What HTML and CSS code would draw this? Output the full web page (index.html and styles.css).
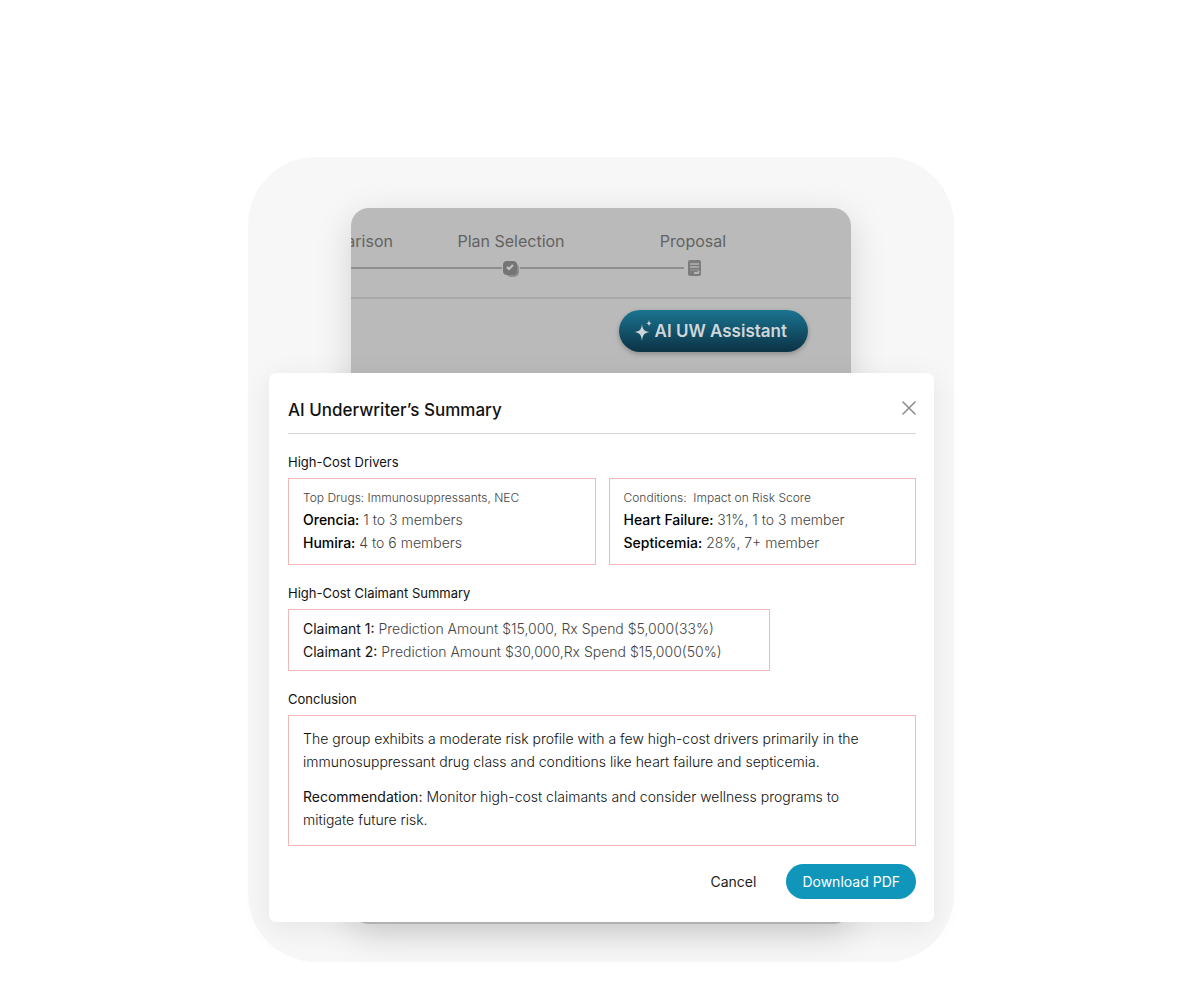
FILE: index.html
```html
<!doctype html>
<html lang="en">
  <head>
    <meta charset="UTF-8" />
    <meta name="viewport" content="width=device-width, initial-scale=1.0" />
    <title>AI Underwriter’s Summary</title>
    <link rel="stylesheet" href="styles.css">
  </head>
  <body>
    <main class="stage">
      <div class="screen">
        <ol class="steps">
          <li class="step">
            <span>Comparison</span>
            <div class="track"><i class="line"></i></div>
          </li>
          <li class="step">
            <span>Plan Selection</span>
            <div class="track">
              <i class="line"></i>
              <svg width="18" height="18" viewBox="0 0 18 18" aria-hidden="true">
                <rect x="4" y="4" width="13" height="14" rx="5" fill="#8c8c8c" />
                <rect x="1" y="2" width="14" height="14" rx="4" fill="#757575" />
                <path d="M5 8l2 2 4-4" fill="none" stroke="#c4c4c4" stroke-width="2" />
              </svg>
              <i class="line"></i>
            </div>
          </li>
          <li class="step">
            <span>Proposal</span>
            <div class="track">
              <i class="line"></i>
              <svg width="18" height="18" viewBox="0 0 18 18" aria-hidden="true">
                <rect x="4" y="1" width="13" height="16" rx="2" fill="#7c7c7c" />
                <path d="M6 5h9M6 8h9" stroke="#a4a4a4" stroke-width="2" />
                <path d="M6 11h9" stroke="#999" />
                <path d="M10 14h4l1-2" fill="none" stroke="#b4b4b4" stroke-width="2" />
              </svg>
              <i class="line line-end"></i>
            </div>
          </li>
        </ol>
        <div class="toolbar">
          <button type="button" class="assistant">
            <svg width="18" height="22" viewBox="0 0 18 22" aria-hidden="true">
              <path d="M8 4c.6 5.500 2 7.400 8 8-6 .8-7.400 3-8 9-.6-6-2-8.200-8-9 6-.6 7.400-2.500 8-8z" fill="#cfd6d9" />
              <path d="M15 0c.3 2.300 1 3 3 3.300-2 .3-2.700 1-3 3.300-.3-2.300-1-3-3-3.300 2-.3 2.700-1 3-3.300z" fill="#cfd6d9" />
            </svg>
            AI UW Assistant
          </button>
        </div>
      </div>

      <section class="modal" role="dialog" aria-labelledby="modalTitle">
        <header class="modal-header">
          <h1 id="modalTitle">AI Underwriter’s Summary</h1>
          <button type="button" class="close" aria-label="Close">
            <svg width="14" height="14" viewBox="0 0 14 14" aria-hidden="true">
              <path d="M1 1l12 12M13 1L1 13" stroke="#8a8a8a" stroke-width="1.500" stroke-linecap="round" />
            </svg>
          </button>
        </header>

        <h2>High-Cost Drivers</h2>
        <div class="drivers">
          <div class="box">
            <p class="caption">Top Drugs: Immunosuppressants, NEC</p>
            <p><strong>Orencia:</strong> 1 to 3 members</p>
            <p><strong>Humira:</strong> 4 to 6 members</p>
          </div>
          <div class="box">
            <p class="caption">Conditions:&nbsp; Impact on Risk Score</p>
            <p><strong>Heart Failure:</strong> 31%, 1 to 3 member</p>
            <p><strong>Septicemia:</strong> 28%, 7+ member</p>
          </div>
        </div>

        <h2>High-Cost Claimant Summary</h2>
        <div class="box claimants">
          <p><b>Claimant 1:</b> Prediction Amount $15,000, Rx Spend $5,000(33%)</p>
          <p><b>Claimant 2:</b> Prediction Amount $30,000,Rx Spend $15,000(50%)</p>
        </div>

        <h2>Conclusion</h2>
        <div class="box conclusion">
          <p>The group exhibits a moderate risk profile with a few high-cost drivers primarily in the immunosuppressant drug class and conditions like heart failure and septicemia.</p>
          <p><b>Recommendation:</b> Monitor high-cost claimants and consider wellness programs to mitigate future risk.</p>
        </div>

        <footer class="actions">
          <button type="button" class="btn">Cancel</button>
          <button type="button" class="btn btn-primary">Download PDF</button>
        </footer>
      </section>
    </main>
  </body>
</html>
```
FILE: styles.css
```css
* {
  box-sizing: border-box;
}
body {
  margin: 0;
  padding: 157px 16px 32px 18px;
  font-family: Inter, "Liberation Sans", sans-serif;
  font-size: 14px;
  line-height: 23px;
  color: #111;
  background-color: #fff;
}
h1,
h2,
p,
ol {
  margin: 0;
  padding: 0;
}
button {
  font: inherit;
  border: none;
  background: none;
  cursor: pointer;
}

/* The app screen and the modal share one grid cell, modal on top */
.stage {
  display: grid;
  grid-template-columns: minmax(0, 1fr);
  max-width: 706px;
  margin: 0 auto;
  border-radius: 68px;
  background-color: #f7f7f7;
}
.screen {
  grid-area: 1 / 1;
  justify-self: center;
  width: 100%;
  max-width: 500px;
  margin: 51px 0 38px;
  overflow: hidden;
  border-radius: 18px;
  background-color: #bababa;
  box-shadow: 0 10px 36px rgba(0, 0, 0, 0.15);
}
.steps {
  display: grid;
  grid-template-columns: 146px 182px 182px;
  justify-content: end;
  padding: 22px 67px 17px 0;
  list-style: none;
  border-bottom: 2px solid #a9a9a9;
  font-size: 16px;
  color: #636363;
}
.step {
  text-align: center;
}
.track {
  display: flex;
  align-items: center;
  height: 24px;
  margin-top: 3px;
}
.line {
  flex: 1;
  height: 2px;
  background-color: #8e8e8e;
}
.line-end {
  background-color: transparent;
}
.toolbar {
  display: flex;
  justify-content: flex-end;
  padding: 11px 43px;
}
.assistant {
  display: flex;
  align-items: center;
  gap: 3px;
  height: 42px;
  padding: 0 21px 0 15px;
  border-radius: 21px;
  background-image: linear-gradient(#1a7490, #0c3245);
  box-shadow: 0 2px 5px rgba(0, 0, 0, 0.25);
  font-size: 17px;
  font-weight: 600;
  color: #cfd6d9;
}

.modal {
  grid-area: 1 / 1;
  align-self: start;
  margin: 216px 20px 40px 21px;
  padding: 24px 18px 23px 19px;
  border-radius: 7px;
  background-color: #fff;
  box-shadow: 0 6px 30px rgba(0, 0, 0, 0.08);
}
.modal-header {
  display: flex;
  justify-content: space-between;
  align-items: flex-start;
  padding-bottom: 10px;
  border-bottom: 1px solid #d6d6d6;
}
.modal-header h1 {
  font-size: 17px;
  line-height: 26px;
  font-weight: 500;
}
.close {
  display: flex;
  padding: 4px 0;
}
h2 {
  margin: 17px 0 4px;
  font-size: 13px;
  font-weight: 400;
}
.drivers {
  display: grid;
  grid-template-columns: 1fr 1fr;
  gap: 13px;
}
.box {
  padding: 8px 14px 10px;
  border: 1px solid #f2b8b8;
  font-weight: 300;
  color: #444;
}
.box strong {
  font-weight: 500;
  color: #000;
}
.box b {
  font-weight: 400;
  color: #111;
}
.box .caption {
  font-size: 12px;
  line-height: 21px;
}
.claimants {
  max-width: 482px;
  padding: 7px 14px;
}
.conclusion {
  padding: 11px 42px 14px 14px;
  color: #111;
}
.conclusion p + p {
  margin-top: 12px;
}
.actions {
  display: flex;
  justify-content: flex-end;
  gap: 12px;
  margin-top: 18px;
}
.btn {
  height: 35px;
  padding: 0 18px;
  border-radius: 18px;
  color: #222;
}
.btn-primary {
  padding: 0 16px;
  background-color: #1096bb;
  color: #fff;
}
```
